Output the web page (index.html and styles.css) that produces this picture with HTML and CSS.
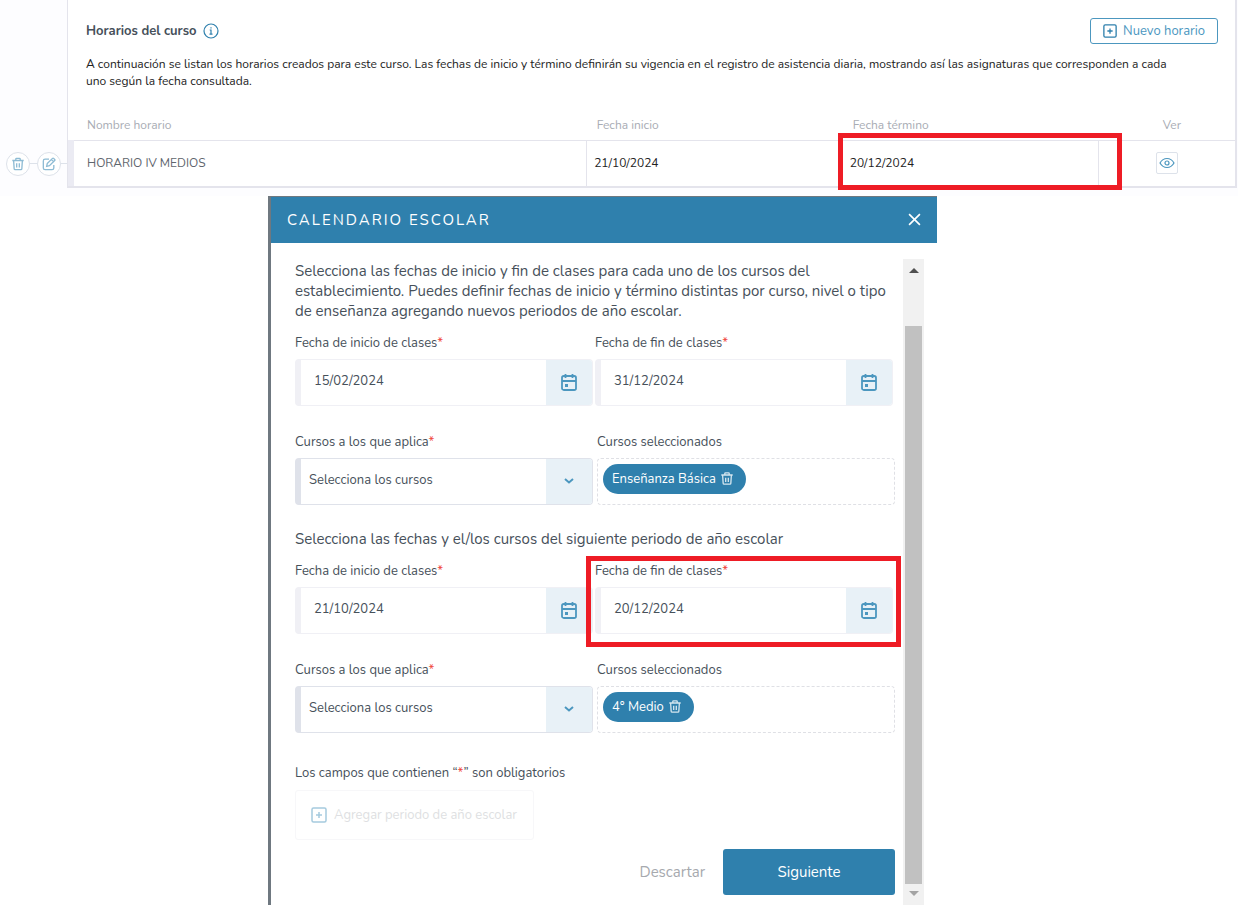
FILE: index.html
```html
<!DOCTYPE html>
<html lang="es">
<head>
<meta charset="utf-8">
<title>Calendario escolar</title>
<link rel="stylesheet" href="styles.css">
</head>
<body>
<svg class="sprite" aria-hidden="true">
  <symbol id="trash" viewBox="0 0 16 16"><path d="M1.500 4h13M5.500 4V2.200c0-.5.3-.7.7-.7h3.600c.4 0 .7.2.7.7V4M3 4l.6 9.300c0 .8.5 1.200 1.200 1.200h6.400c.7 0 1.200-.4 1.200-1.200L13 4M6.500 7v5M9.500 7v5"/></symbol>
  <symbol id="edit" viewBox="0 0 16 16"><path d="M8 2.500H3.500c-1.200 0-2 .8-2 2v8c0 1.200.8 2 2 2h8c1.200 0 2-.8 2-2V9M6 7.500 12 1.600c.4-.4.9-.4 1.300 0l1.200 1.200c.4.4.4.9 0 1.300L8.500 10l-3.200.8zM10.800 3l2.300 2.300"/></symbol>
  <symbol id="plus-box" viewBox="0 0 16 16"><rect x="1" y="1" width="14" height="14" rx="1.500"/><path d="M8 5v6M5 8h6"/></symbol>
  <symbol id="calendar" viewBox="0 0 16 18"><rect x="1" y="3" width="14" height="14" rx="1.800"/><path d="M1 8h14M4.500 1v4M11.500 1v4"/><path class="solid" d="M4 11h3v3H4z"/></symbol>
  <symbol id="chevron" viewBox="0 0 10 6"><path d="M1 1l4 3.500L9 1"/></symbol>
</svg>

<section class="schedules">
  <div class="row-actions">
    <button class="round" aria-label="Eliminar horario"><svg class="icon-s"><use href="#trash"/></svg></button>
    <span class="link"></span>
    <button class="round" aria-label="Editar horario"><svg class="icon-s"><use href="#edit"/></svg></button>
    <span class="link"></span>
  </div>
  <div class="panel">
    <header class="panel-head">
      <h1>Horarios del curso
        <svg class="info" viewBox="0 0 16 16" aria-hidden="true"><circle cx="8" cy="8" r="7"/><path d="M6.700 7H8v4M6.500 11.200h3M8 4.300v1.200"/></svg>
      </h1>
      <button class="new-btn"><svg class="icon-s"><use href="#plus-box"/></svg>Nuevo horario</button>
    </header>
    <p class="panel-text">A continuación se listan los horarios creados para este curso. Las fechas de inicio y término definirán su vigencia en el registro de asistencia diaria, mostrando así las asignaturas que corresponden a cada uno según la fecha consultada.</p>
    <table>
      <thead>
        <tr><th class="col-name">Nombre horario</th><th class="col-date">Fecha inicio</th><th class="col-date">Fecha término</th><th class="col-view">Ver</th></tr>
      </thead>
      <tbody>
        <tr>
          <td class="name">HORARIO IV MEDIOS</td>
          <td>21/10/2024</td>
          <td class="marked plain">20/12/2024<span class="mark mark-cell"></span></td>
          <td class="view"><button class="eye" aria-label="Ver horario"><svg viewBox="0 0 16 12"><path d="M1 6c1.600-2.800 4-4.500 7-4.500S13.400 3.200 15 6c-1.600 2.800-4 4.500-7 4.500S2.600 8.800 1 6z"/><circle cx="8" cy="6" r="2"/></svg></button></td>
        </tr>
      </tbody>
    </table>
  </div>
</section>

<div class="stage">
  <section class="modal" role="dialog" aria-labelledby="modal-title">
    <header class="modal-head">
      <h2 id="modal-title">CALENDARIO ESCOLAR</h2>
      <button class="close" aria-label="Cerrar"><svg viewBox="0 0 12 12"><path d="M1 1l10 10M11 1L1 11"/></svg></button>
    </header>
    <div class="modal-body">
      <form class="form">
        <p class="lead">Selecciona las fechas de inicio y fin de clases para cada uno de los cursos del establecimiento. Puedes definir fechas de inicio y término distintas por curso, nivel o tipo de enseñanza agregando nuevos periodos de año escolar.</p>
        <div class="pair dates">
          <div class="field">
            <label for="start1">Fecha de inicio de clases<span class="req">*</span></label>
            <div class="control"><input id="start1" type="text" value="15/02/2024"><button type="button" class="addon" aria-label="Abrir calendario"><svg class="cal"><use href="#calendar"/></svg></button></div>
          </div>
          <div class="field">
            <label for="end1">Fecha de fin de clases<span class="req">*</span></label>
            <div class="control"><input id="end1" type="text" value="31/12/2024"><button type="button" class="addon" aria-label="Abrir calendario"><svg class="cal"><use href="#calendar"/></svg></button></div>
          </div>
        </div>
        <div class="pair courses">
          <div class="field">
            <label for="courses1">Cursos a los que aplica<span class="req">*</span></label>
            <div class="control choice"><select id="courses1"><option>Selecciona los cursos</option></select><span class="addon"><svg class="chev"><use href="#chevron"/></svg></span></div>
          </div>
          <div class="field">
            <span class="label">Cursos seleccionados</span>
            <div class="chips"><span class="chip">Enseñanza Básica<button type="button" aria-label="Quitar Enseñanza Básica"><svg class="icon-m"><use href="#trash"/></svg></button></span></div>
          </div>
        </div>
        <p class="lead next">Selecciona las fechas y el/los cursos del siguiente periodo de año escolar</p>
        <div class="pair dates">
          <div class="field">
            <label for="start2">Fecha de inicio de clases<span class="req">*</span></label>
            <div class="control"><input id="start2" type="text" value="21/10/2024"><button type="button" class="addon" aria-label="Abrir calendario"><svg class="cal"><use href="#calendar"/></svg></button></div>
          </div>
          <div class="field marked">
            <label for="end2">Fecha de fin de clases<span class="req">*</span></label>
            <div class="control"><input id="end2" type="text" value="20/12/2024"><button type="button" class="addon" aria-label="Abrir calendario"><svg class="cal"><use href="#calendar"/></svg></button></div>
            <span class="mark mark-field"></span>
          </div>
        </div>
        <div class="pair courses">
          <div class="field">
            <label for="courses2">Cursos a los que aplica<span class="req">*</span></label>
            <div class="control choice"><select id="courses2"><option>Selecciona los cursos</option></select><span class="addon"><svg class="chev"><use href="#chevron"/></svg></span></div>
          </div>
          <div class="field">
            <span class="label">Cursos seleccionados</span>
            <div class="chips"><span class="chip">4° Medio<button type="button" aria-label="Quitar 4° Medio"><svg class="icon-m"><use href="#trash"/></svg></button></span></div>
          </div>
        </div>
        <p class="note">Los campos que contienen “<span class="req">*</span>” son obligatorios</p>
        <button type="button" class="add" disabled><svg class="icon-l"><use href="#plus-box"/></svg>Agregar periodo de año escolar</button>
        <footer class="actions">
          <button type="button" class="discard">Descartar</button>
          <button type="submit" class="submit">Siguiente</button>
        </footer>
      </form>
      <div class="scrollbar" aria-hidden="true">
        <svg viewBox="0 0 10 5"><path class="up" d="M0 5l5-5 5 5z"/></svg>
        <span class="thumb"></span>
        <svg viewBox="0 0 10 5"><path class="down" d="M0 0l5 5 5-5z"/></svg>
      </div>
    </div>
  </section>
</div>
</body>
</html>
```
FILE: styles.css
```css
* { box-sizing: border-box; }

body {
  margin: 0;
  background: #fff;
  color: #46505a;
  font-family: Nunito, "Open Sans", "Noto Sans", sans-serif;
  font-size: 13px;
  line-height: 20px;
}

h1, h2, p { margin: 0; font-weight: 400; }
button, input, select { font: inherit; color: inherit; margin: 0; }
button { padding: 0; border: 0; background: none; cursor: pointer; }
svg { fill: none; stroke: #4c97bf; stroke-width: 1.5; flex: none; }

.sprite { position: absolute; width: 0; height: 0; }
.solid { fill: #4c97bf; stroke: none; }
.icon-s { width: 14px; height: 14px; }
.icon-m { width: 14px; height: 15px; }
.icon-l { width: 16px; height: 16px; }
.req { color: #f0473e; }

.marked { position: relative; }
.mark { position: absolute; border: 5px solid #ee1c25; pointer-events: none; }

/* Schedule list */
.schedules {
  display: grid;
  grid-template-columns: 67px 1fr;
  padding: 0 1px 8px 0;
  background: #fdfdff;
  font-size: 12px;
}

.row-actions {
  display: flex;
  align-items: center;
  align-self: end;
  height: 48px;
  padding-left: 6px;
}
.round {
  display: grid;
  place-items: center;
  width: 24px;
  height: 24px;
  border: 1px solid #dde2ea;
  border-radius: 50%;
  background: #fff;
}
.round svg { stroke: #8dbbd4; }
.link { flex: 1; border-top: 1px solid #dde2ea; }

.panel {
  background: #fff;
  border: solid #e4e4ec;
  border-width: 0 2px 2px 1px;
}
.panel-head {
  display: flex;
  align-items: center;
  justify-content: space-between;
  padding: 18px 17px 0 18px;
}
.panel-head h1 {
  display: flex;
  align-items: center;
  gap: 6px;
  font-size: 13px;
  font-weight: 700;
}
.info { width: 16px; height: 16px; stroke: #2f80ad; stroke-width: 1.2; }
.new-btn {
  display: flex;
  align-items: center;
  gap: 6px;
  height: 26px;
  padding: 0 12px;
  border: 1px solid #4c97bf;
  border-radius: 3px;
  color: #4c97bf;
  font-size: 13px;
}
.new-btn svg { stroke: #2f80ad; }
.panel-text {
  padding: 12px 50px 25px 18px;
  color: #222;
  line-height: 17px;
}

table { width: 100%; border-collapse: collapse; table-layout: fixed; }
th {
  padding: 0 0 5px 10px;
  text-align: left;
  font-weight: 400;
  color: #a8acb4;
}
th.col-name { width: 44.3%; padding-left: 16px; }
th.col-date { width: 22%; }
th.col-view { padding: 0 0 5px 64px; }
td {
  height: 45px;
  padding: 0 7px;
  border: solid #e4e4ec;
  border-width: 1px 0 0 1px;
  color: #222;
}
td.plain { border-left: 0; }
td.name { padding-left: 13px; border-left: 6px solid #ebebf3; color: #5f666e; }
td.view { padding-left: 57px; }
.eye {
  display: grid;
  place-items: center;
  width: 22px;
  height: 22px;
  border: 1px solid #dde2ea;
  border-radius: 2px;
}
.eye svg { width: 16px; height: 12px; stroke-width: 1.2; }
.mark-cell { inset: -8px -24px -4px -5px; }

/* Calendar dialog */
.stage { display: grid; grid-template-columns: 268fr 669fr 301fr; }
.modal {
  grid-column: 2;
  border: solid #6f7880;
  border-width: 1px 0 0 3px;
  background: #fff;
}
.modal-head {
  display: flex;
  align-items: center;
  justify-content: space-between;
  height: 46px;
  padding: 0 16px;
  background: #2f80ad;
  color: #fff;
}
.modal-head h2 { font-size: 15px; letter-spacing: 2px; }
.close { display: grid; place-items: center; width: 14px; height: 14px; }
.close svg { width: 13px; height: 13px; stroke: #fff; }

.modal-body {
  display: grid;
  grid-template-columns: 1fr 21px;
  gap: 8px;
  padding: 16px 13px 0 24px;
}
.form { display: flex; flex-direction: column; padding: 2px 0 10px; }
.lead { font-size: 15px; }
.pair { display: grid; grid-template-columns: 1fr 1fr; }
.dates { gap: 2px; padding: 12px 2px 0 0; }
.courses { gap: 4px; padding-top: 26px; }
.next { padding-top: 24px; }
.field { display: flex; flex-direction: column; gap: 6px; min-width: 0; }
.control {
  display: flex;
  height: 47px;
  border: 1px solid #f0f0f5;
  border-left-width: 6px;
  border-radius: 4px;
  overflow: hidden;
}
.choice { border-color: #dfe2ea; }
.control input, .control select {
  flex: 1;
  min-width: 0;
  padding: 0 13px 2px;
  border: 0;
  outline: 0;
  background: #fff;
}
.control select { padding: 0 8px 2px; appearance: none; }
.addon { display: grid; place-items: center; width: 46px; background: #e8f1f7; }
.cal { width: 16px; height: 18px; stroke-width: 1.8; }
.chev { width: 10px; height: 6px; stroke-width: 2; }
.chips {
  height: 47px;
  padding: 5px;
  border: 1px dashed #dfe0e5;
  border-radius: 4px;
}
.chip {
  display: inline-flex;
  align-items: center;
  gap: 4px;
  height: 30px;
  padding: 0 12px 0 9px;
  border-radius: 15px;
  background: #2f80ad;
  color: #fff;
}
.chip button { display: flex; }
.chip svg { stroke: #d5e6ef; }
.mark-field { inset: -5px -8px -13px -9px; }

.note { padding-top: 30px; }
.add {
  display: flex;
  align-items: center;
  align-self: start;
  gap: 7px;
  height: 50px;
  margin-top: 7px;
  padding: 0 16px 0 15px;
  border: 1px solid #f7f7f9;
  border-radius: 3px;
  color: #dedfe2;
}
.add svg { stroke: #a5cade; }
.actions {
  display: flex;
  justify-content: flex-end;
  gap: 18px;
  margin-top: 9px;
  font-size: 15px;
}
.discard { color: #a6a9ae; }
.submit {
  width: 172px;
  height: 46px;
  border-radius: 3px;
  background: #2f80ad;
  color: #fff;
}

.scrollbar {
  display: flex;
  flex-direction: column;
  align-items: center;
  padding: 9px 2px;
  background: #f1f1f1;
}
.scrollbar svg { width: 10px; height: 5px; stroke: none; }
.thumb { flex: 1; width: 100%; margin: 53px 0 7px; background: #c1c1c1; }
.up { fill: #505050; }
.down { fill: #a3a3a3; }
```
